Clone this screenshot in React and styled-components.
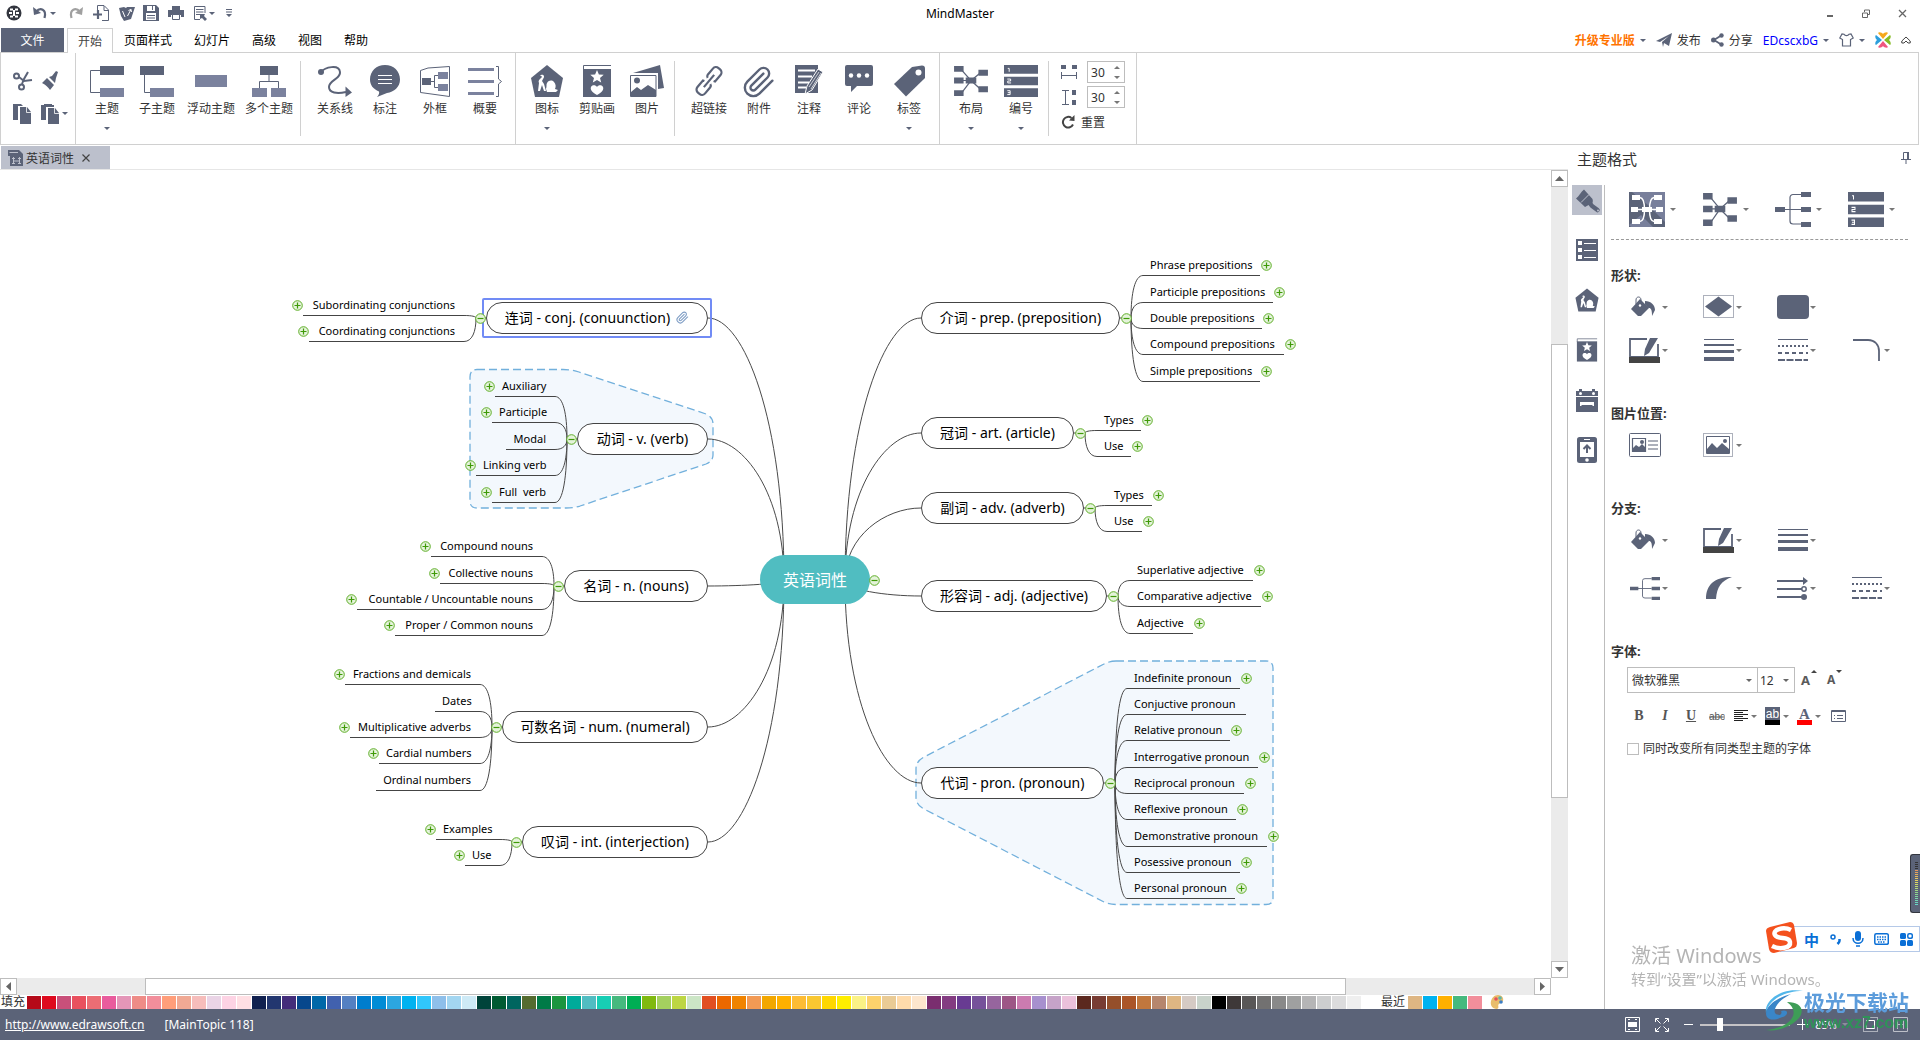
import React, { useState } from "react";
import styled, { createGlobalStyle, css } from "styled-components";

const INK = "#5b6378";
const SOFT = "#7b829e";
const LINE = "#d0d0d0";
const EDGE = "#bdbdbd";

const GlobalStyle = createGlobalStyle`
  *, *::before, *::after { box-sizing: border-box; }
  html, body, #root { height: 100%; }
  body { margin: 0; background: #fff; overflow: hidden; }
  body, button, input, select {
    font-family: "Noto Sans", "Noto Sans CJK SC", sans-serif;
    font-size: 12px;
    color: #333;
  }
  svg { display: block; flex: none; }
`;

const plainButton = css`
  border: 0;
  padding: 0;
  margin: 0;
  background: transparent;
  cursor: pointer;
`;

const Svg = ({ w, h, box, children, ...rest }) => (
  <svg width={w} height={h} viewBox={box || `0 0 ${w} ${h}`} fill="none" aria-hidden="true" {...rest}>
    {children}
  </svg>
);

/* ---------- icons ---------- */

const TopicIcon = () => (
  <Svg w={36} h={32}>
    <path d="M11 5.500H1.500V27.500H11" stroke={INK} />
    <path fill={INK} d="M11 1h24v9H11z" />
    <path fill={SOFT} d="M11 23h24v9H11z" />
  </Svg>
);
const SubtopicIcon = () => (
  <Svg w={36} h={32}>
    <path d="M5.500 9V27.500H11" stroke={INK} />
    <path fill={INK} d="M1 1h24v9H1z" />
    <path fill={SOFT} d="M11 23h24v9H11z" />
  </Svg>
);
const FloatingIcon = () => (
  <Svg w={36} h={32}>
    <path fill={SOFT} d="M2 10h32v12H2z" />
  </Svg>
);
const MultipleIcon = () => (
  <Svg w={36} h={32}>
    <path d="M18 9V16.500M8.500 23V16.500H27.500V23" stroke={INK} />
    <path fill={INK} d="M9 1h18v9H9z" />
    <path fill={SOFT} d="M1 23h15v9H1zM20 23h15v9H20z" />
  </Svg>
);
const RelationIcon = () => (
  <Svg w={36} h={32}>
    <circle cx="4" cy="7" r="3" fill={INK} />
    <path d="M4 7C8 2 22-1 23 7C24 14 12 15 12 22C12 28 20 29 29 27" stroke={INK} strokeWidth="2" />
    <path fill={INK} d="M28.500 21.500 35 27.500 28.500 32z" />
  </Svg>
);
const CalloutIcon = () => (
  <Svg w={36} h={32}>
    <path fill={INK} d="M18 0C26.500 0 33 6 33 14.500C33 22 27 27 20 28L10 32C12 30 12.500 28 12 26.500C6 24 3 20 3 14.500C3 6 9.500 0 18 0z" />
    <path d="M11 10.500h14M11 14.500h14M11 18.500h14" stroke="#fff" />
  </Svg>
);
const FrameIcon = () => (
  <Svg w={36} h={32}>
    <path d="M3.500 5.500 11 3 32.500 1.500V31.500L3.500 27.500z" stroke={INK} />
    <path d="M14 16.500h3.500M21 10.500H17.500V22.500H21" stroke={INK} />
    <path fill={INK} d="M5 13h9v7H5z" />
    <path fill={SOFT} d="M21 7h10v7H21zM21 19h10v7H21z" />
  </Svg>
);
const SummaryIcon = () => (
  <Svg w={36} h={32}>
    <path fill={SOFT} d="M1 3h26v3H1zM1 15h26v3H1zM1 27h26v3H1z" />
    <path d="M29 1.500H31.500V14L34.500 16.500 31.500 19V31.500H29" stroke={INK} />
  </Svg>
);
const MarkIcon = ({ w = 36, h = 32 }) => (
  <Svg w={w} h={h} box="0 0 36 32">
    <path fill={INK} d="M18 0 34 13 30 32H6L2 13z" />
    <path
      fill="#fff"
      d="M12 10c3-1 4 2 2 4l-1 2 2 3 2 7h-2l-2-6-2 6H9l1-8c-1-2 0-3 1-4l2-2c0-1-1-1-2-1zM17 24c1-3 0-4 1-6 2-3 5-3 7-1 2 2 2 5 1 7l3 1-2 2h-9z"
    />
  </Svg>
);
const ClipartIcon = ({ w = 36, h = 32 }) => (
  <Svg w={w} h={h} box="0 0 36 32">
    <path fill={INK} d="M4 4h28v28H4z" />
    <path d="M4.500 5V0.500H32" stroke={INK} />
    <path fill="#fff" d="m18 5 1.900 4.400 4.800.4-3.700 3.100 1.200 4.600L18 15l-4.200 2.500 1.200-4.600-3.700-3.100 4.800-.4zM18 30c-5-3-7-5-6-8 1-2.500 5-2 6 0 1-2 5-2.500 6 0 1 3-1 5-6 8z" />
  </Svg>
);
const PhotosIcon = () => (
  <Svg w={36} h={32}>
    <path fill={INK} d="M4 8 31 0l4 23-6 1V8z" />
    <path fill="#fff" stroke={INK} d="M1.500 10.500h25.500v21H1.500z" />
    <circle cx="8" cy="15.500" r="3" fill={INK} />
    <path fill={INK} d="M2 27 8 22l4 3 7-5 8 5v7H2z" />
  </Svg>
);
const LinkIcon = () => (
  <Svg w={36} h={32}>
    <g transform="rotate(-50 18 16)" stroke={INK} strokeWidth="2.200">
      <path d="M15 12.500 14.500 11H6a4 4 0 0 0-4 4v2a4 4 0 0 0 4 4h8a3 3 0 0 0 2.500-2" />
      <path d="M21 19.500 21.500 21H30a4 4 0 0 0 4-4v-2a4 4 0 0 0-4-4h-8a3 3 0 0 0-2.500 2" />
      <path d="M10 16h16" />
    </g>
  </Svg>
);
const ClipIcon = ({ size = 34, color = INK, stroke = 1.700 }) => (
  <Svg w={size} h={size} box="0 0 24 24">
    <path
      d="m21.440 11.050-9.190 9.190a6 6 0 0 1-8.490-8.490l8.570-8.570A4 4 0 1 1 18 8.840l-8.590 8.570a2 2 0 0 1-2.830-2.830l8.490-8.480"
      stroke={color}
      strokeWidth={stroke}
      strokeLinecap="round"
    />
  </Svg>
);
const NoteIcon = () => (
  <Svg w={36} h={32}>
    <path fill={INK} d="M4 0h23v28H4z" />
    <path d="M7 5.500h17M7 11.500h14M7 17.500h11M7 22.500h8" stroke="#fff" strokeWidth="2" />
    <path fill={INK} stroke="#fff" d="M14 29l2-8L27 4l5 3-11 18z" />
    <path d="M18 22 28 7M20 24 30 8" stroke="#fff" strokeWidth=".7" />
  </Svg>
);
const CommentIcon = () => (
  <Svg w={36} h={32}>
    <path fill={INK} d="M6 0h24a2 2 0 0 1 2 2v17a2 2 0 0 1-2 2H16l-6 6v-6H6a2 2 0 0 1-2-2V2a2 2 0 0 1 2-2z" />
    <g fill="#fff">
      <circle cx="10" cy="10.500" r="2.200" />
      <circle cx="18" cy="10.500" r="2.200" />
      <circle cx="26" cy="10.500" r="2.200" />
    </g>
  </Svg>
);
const TagIcon = () => (
  <Svg w={36} h={32}>
    <path fill={INK} d="M3 19 21 2l10-1.500a3 3 0 0 1 3 3V13L15 31.500z" />
    <circle cx="27.500" cy="7.500" r="3" fill="#fff" />
  </Svg>
);
const LayoutIcon = ({ w = 36, h = 32 }) => (
  <Svg w={w} h={h} box="1 0 34 33" preserveAspectRatio="none">
    <path d="M9 5 18 16 9 29M9 16H18M27 8 18 16 27 25" stroke={INK} strokeWidth="1.200" />
    <path fill={INK} d="M2 1h9v6H2zM2 13h9v6H2zM2 26h9v6H2zM13 13h10v6H13zM25 5h9v6H25zM25 22h9v6H25z" />
  </Svg>
);
const NumberIcon = ({ w = 36, h = 32 }) => (
  <Svg w={w} h={h} box="0 0 36 33" preserveAspectRatio="none">
    <path fill={INK} d="M0 0h36v9H0zM0 12h36v9H0zM0 24h36v9H0z" />
    <path stroke="#fff" d="M4 3.500h1.500V7M3.500 14.500H7V16.500H4V18.500H7.500M3.500 26.500H6.500V30.500H3.500M4 28.500H6.500" />
  </Svg>
);
const MapStyleIcon = () => (
  <Svg w={36} h={35}>
    <path fill={INK} d="M0 0h36v35H0z" />
    <path fill={SOFT} d="M3 0H36V30L19 13zM0 33 12 23 24 35H2z" opacity=".9" />
    <path d="M11 5.500C15 6 15.500 12 15.500 17.500S15 29 11 29.500M25 5.500C21 6 20.500 12 20.500 17.500S21 29 25 29.500M8 17.500H28" stroke="#fff" strokeWidth="1.500" />
    <path fill="#fff" d="M3 3h8v5H3zM2 15h7v5H2zM3 27h8v5H3zM25 3h8v5H25zM27 15h7v5H27zM25 27h8v5H25zM13 15h10v5H13z" />
  </Svg>
);
const TreeIcon = ({ w = 36, h = 35 }) => (
  <Svg w={w} h={h} box="0 0 36 35" preserveAspectRatio="none">
    <path d="M8 17.500H26M26 2.500H18a3 3 0 0 0-3 3V29a3 3 0 0 0 3 3H26" stroke={INK} strokeWidth="1.200" />
    <path fill={INK} d="M0 15h10v5H0zM26 0h10v5H26zM26 15h10v5H26zM26 30h10v5H26z" />
  </Svg>
);
const BucketIcon = () => (
  <Svg w={31} h={24}>
    <path fill={INK} d="M2 14 11 4l9 9-8 8h-3zM16 6c6 0 10 4 10 9l-3 6c0-6-1-8-3-8l-4-4z" />
    <path d="M7 9V5c0-4 5-4 5 0v6" stroke={INK} />
    <circle cx="11" cy="10.500" r="1.200" fill="#fff" />
  </Svg>
);
const DiamondIcon = () => (
  <Svg w={31} h={24}>
    <path d="M.5.500h30v22H.500z" stroke={INK} strokeDasharray="1 1" />
    <path fill={INK} d="M15.500 1.500 29 11.500 15.500 21.500 2 11.500z" />
  </Svg>
);
const RoundRectIcon = () => (
  <Svg w={32} h={24}>
    <rect width="32" height="24" rx="4" fill={INK} />
  </Svg>
);
const PenBoxIcon = () => (
  <Svg w={31} h={25}>
    <path d="M18 1H1V19H29V6" stroke={INK} strokeWidth="1.800" />
    <path fill={INK} d="M21 0h8L20 15l-5 3 1-7z" />
    <path fill="#444" d="M0 19h31v6H0z" />
  </Svg>
);
const WeightIcon = () => (
  <Svg w={30} h={22}>
    <path fill={INK} d="M0 0h30v1H0zM0 5h30v2H0zM0 11h30v3H0zM0 18h30v4H0z" />
  </Svg>
);
const DashIcon = () => (
  <Svg w={30} h={22}>
    <path d="M0 .5h30" stroke={INK} />
    <path d="M0 7h30" stroke={INK} strokeWidth="2" strokeDasharray="2 2" />
    <path d="M0 14h30" stroke={INK} strokeWidth="2" strokeDasharray="4 3" />
    <path d="M0 21h30" stroke={INK} strokeWidth="2" strokeDasharray="7 1.500" />
  </Svg>
);
const CornerIcon = () => (
  <Svg w={31} h={22}>
    <path d="M2 1H17C24 1 28 6 28 12V22" stroke={INK} strokeWidth="1.800" />
  </Svg>
);
const CardPhotoIcon = () => (
  <Svg w={32} h={24}>
    <rect x=".5" y=".5" width="31" height="23" rx="1" stroke={INK} />
    <path d="M3.500 5.500H16.500V18.500H3.500zM19 8h10M19 12h10M19 16h10" stroke={INK} strokeWidth="1.200" />
    <path fill={INK} d="M4 15 7 12l3 2 3-3 3 3v4H4z" />
    <circle cx="13" cy="9" r="2" fill={INK} />
  </Svg>
);
const PhotoDotsIcon = () => (
  <Svg w={31} h={24}>
    <path d="M.5.500h29v23H.500z" stroke={INK} strokeDasharray="1 1" />
    <path d="M3.500 3.500H26.500V20.500H3.500z" stroke={INK} />
    <path fill={INK} d="M4 16 9 10l5 5 5-5 7 6v4H4z" />
    <circle cx="22" cy="8" r="2" fill={INK} />
  </Svg>
);
const TaperIcon = () => (
  <Svg w={30} h={22}>
    <path fill={INK} d="M2 22C2 8 10 0 28 0 17 4 13 10 12 22z" />
  </Svg>
);
const ArrowsIcon = () => (
  <Svg w={31} h={23}>
    <path d="M0 4h27M0 12h25M0 20h27" stroke={INK} strokeWidth="1.800" />
    <path fill={INK} d="M26 0 31 4 26 8z" />
    <circle cx="27" cy="12" r="2.200" fill="#fff" stroke={INK} strokeWidth="1.500" />
    <circle cx="27" cy="20" r="3" fill={INK} />
  </Svg>
);
const PaintbrushIcon = () => (
  <Svg w={30} h={30}>
    <path fill={INK} d="M4 13.500C7 11 9 7 12 4.500L20.500 14c1 3 0 5-3 5.500L13 22z" />
    <path d="M9 17.500 17 9.500" stroke="#bcc0cc" />
    <path d="M17 17 20 21 25.500 25" stroke={INK} strokeWidth="4.500" strokeLinecap="round" />
    <circle cx="26" cy="25.500" r="1" fill="#bcc0cc" />
  </Svg>
);
const ListIcon = () => (
  <Svg w={22} h={22}>
    <path fill={INK} d="M0 0h22v22H0z" />
    <path fill="#fff" d="M2 2h4v4H2zM2 9h4v4H2zM2 16h4v4H2zM8 4h12v1H8zM8 11h12v1H8zM8 18h12v1H8z" />
  </Svg>
);
const CalendarIcon = () => (
  <Svg w={22} h={23}>
    <path fill={INK} d="M0 2h3V0h3v2h10V0h3v2h3v5H0zM0 8h22v15H0z" />
    <circle cx="4.500" cy="4.500" r="1.500" fill="#fff" />
    <circle cx="17.500" cy="4.500" r="1.500" fill="#fff" />
    <path fill="#fff" d="M4 13h14v4h-1.500v-1H5.500v1H4z" />
  </Svg>
);
const PhoneIcon = () => (
  <Svg w={20} h={26}>
    <rect width="20" height="26" rx="2.500" fill={INK} />
    <path fill="#fff" d="M3 5h14v15H3zM7 2h6v1H7z" />
    <circle cx="10" cy="23" r="1.800" fill="#fff" />
    <path d="M10 16V9M6.500 12 10 8.500 13.500 12" stroke={INK} strokeWidth="2" />
  </Svg>
);
const ScissorsIcon = () => (
  <Svg w={20} h={20}>
    <g stroke={INK} strokeWidth="2">
      <circle cx="3.500" cy="5" r="2.500" />
      <circle cx="8.500" cy="16" r="2.500" />
      <path d="M6 6 11 10 19 9M9 13 11 8 15 1" />
    </g>
  </Svg>
);
const BrushIcon = () => (
  <Svg w={18} h={20}>
    <path fill={INK} d="M1 12 6 7l7 7-4 5c-2-3-4-5-8-7z" />
    <path fill={INK} d="M8 6 11 5 15 0l2 1-2 6-1 5z" />
  </Svg>
);
const CopyIcon = () => (
  <Svg w={19} h={20}>
    <path fill={INK} d="M0 0h8l2 2H5v14H0zM7 3h7l4 5v12H7z" />
    <path d="M13.500 3V8.500H18" stroke="#fff" strokeWidth=".8" />
  </Svg>
);
const PasteIcon = () => (
  <Svg w={19} h={20}>
    <path fill={INK} d="M0 1h3v15H0zM3 0h8v2H3zM11 1h2v2H5v13H3V1zM7 4h7l4 5v11H7z" />
    <path d="M13.500 4V9.500H18" stroke="#fff" strokeWidth=".8" />
  </Svg>
);
const LogoIcon = () => (
  <Svg w={16} h={16}>
    <circle cx="8" cy="8" r="7.500" fill="#33363f" />
    <path fill="#fff" d="M4 3.500h3v2H4zM9 3.500h3v2H9zM3 7h3v2H3zM10 7h3v2h-3zM4 10.500h3v2H4zM9 10.500h3v2H9zM7 5h2v6H7z" />
  </Svg>
);
const UndoIcon = ({ flip, color = INK }) => (
  <Svg w={16} h={14} transform={flip ? "scale(-1 1)" : undefined}>
    <path fill={color} d="M1 1 2 9 9 7z" />
    <path d="M4 6C8 1 15 3 12.500 12" stroke={color} strokeWidth="2.200" />
  </Svg>
);
const NewDocIcon = () => (
  <Svg w={16} h={16}>
    <path d="M4.500 8V.500H11L15.500 5V15.500H9M11 1V5.500H15" stroke={INK} />
    <path d="M0 9.500H9M5 5V14" stroke={INK} strokeWidth="2.200" />
  </Svg>
);
const OpenIcon = () => (
  <Svg w={17} h={16}>
    <path fill={INK} d="M1 3 6 2l2 1 1-1h8l-4 12-7 2L3 11z" />
    <path d="M4.500 6 7 12M13 4.500 9.500 11M10.500 5.500 13 4.500 13.500 7" stroke="#fff" />
  </Svg>
);
const SaveIcon = () => (
  <Svg w={16} h={16}>
    <path fill={INK} d="M0 0h13l3 3v13H0z" />
    <path fill="#fff" d="M4 1h8v5H4zM3 8h10v7H3z" />
    <path d="M9.500 1v4M4 10.500h8M4 13h8" stroke={INK} />
  </Svg>
);
const PrintIcon = () => (
  <Svg w={16} h={14}>
    <path fill={INK} d="M4 0h8v4H4zM0 4h16v7h-3V9H3v2H0z" />
    <path fill="#fff" stroke={INK} d="M4.500 8.500h7v5h-7z" />
  </Svg>
);
const ExportIcon = () => (
  <Svg w={13} h={15}>
    <path d="M11 7V.500H.500V13.500H6M2 3.500h7.500M2 6h7.500M2 8.500h5" stroke={INK} />
    <path fill={INK} d="M6 8h5l-1 2 3 3-2 2-3-3-2 1z" />
  </Svg>
);
const MoreIcon = () => (
  <Svg w={8} h={8}>
    <path fill={INK} d="M1 0h6v1H1zM1 2.500h6v1H1zM1 5h6L4 8z" />
  </Svg>
);
const PlaneIcon = () => (
  <Svg w={16} h={14}>
    <path fill={INK} d="M0 8 16 0 13 13 8 10 7 14 6 9 13 3 4 9z" />
  </Svg>
);
const ShareIcon = () => (
  <Svg w={13} h={14}>
    <path d="M11 2 3 7l8 5" stroke={INK} strokeWidth="1.800" />
    <g fill={INK}>
      <circle cx="10.500" cy="2.500" r="2.200" />
      <circle cx="2.500" cy="7" r="2.500" />
      <circle cx="10.500" cy="11.500" r="2.200" />
    </g>
  </Svg>
);
const ShirtIcon = () => (
  <Svg w={15} h={14}>
    <path d="M5 1.200C6 3 9 3 10 1.200L12 1 14.200 5 11.500 6.500V13H3.500V6.500L.800 5 3 1z" stroke={INK} strokeWidth="1.200" />
  </Svg>
);
const FlowerIcon = () => (
  <Svg w={16} h={16}>
    <path fill="#f5a81c" d="M3 1c1-1.500 4-.5 5 1 1-1.500 4-2.500 5-1l-5 6z" />
    <path fill="#f0567f" d="M3 15c1 1.500 4 .5 5-1 1 1.500 4 2.500 5 1L8 9z" />
    <path fill="#2d9fdc" d="M1 3c-1.500 1-.5 4 1 5-1.500 1-2.500 4-1 5l6-5z" />
    <path fill="#86bc25" d="M15 3c1.500 1 .5 4-1 5 1.500 1 2.500 4 1 5L9 8z" />
  </Svg>
);
const CollapseIcon = () => (
  <Svg w={10} h={8}>
    <path d="M.8 5 5 1 9.200 5V7H7L5 5 3 7H.800z" stroke="#444" />
  </Svg>
);
const PinIcon = () => (
  <Svg w={10} h={12}>
    <path d="M2.500 7V.500H7.500V7M0 7.500H10M5 8v4" stroke={INK} />
    <path fill={INK} d="M6 0h2v7H6z" />
  </Svg>
);
const HSpaceIcon = () => (
  <Svg w={16} h={15}>
    <path fill={INK} d="M0 0h5v4H0zM11 0h5v4H11z" />
    <path d="M.5 7v7M15.500 7v7M0 10.500h16" stroke={INK} />
  </Svg>
);
const VSpaceIcon = () => (
  <Svg w={16} h={15}>
    <path fill={INK} d="M11 0h4v5H11zM11 10h4v5H11z" />
    <path d="M1 .5h7M1 14.500h7M4.500 0v15" stroke={INK} />
  </Svg>
);
const ResetIcon = () => (
  <Svg w={14} h={14}>
    <path d="M12 9.500A5.300 5.300 0 1 1 10.500 3" stroke="#444" strokeWidth="2" />
    <path fill="#444" d="M8 5.500 13.500 6V0z" />
  </Svg>
);
const DocIcon = () => (
  <Svg w={17} h={17}>
    <path fill={INK} d="M1 1h11l4 4v12H3V7H1z" />
    <path d="M2.500 3.500H11M5 9.500h3M11 9.500h3M5 14.500h3M11 14.500h3M6.500 8v7M12.500 8v7M7 12h5" stroke="#bcc0cc" />
  </Svg>
);

/* ---------- shared parts ---------- */

const Caret = styled.span`
  flex: none;
  border: 3px solid transparent;
  border-top-color: ${(p) => p.$color || INK};
  border-bottom: 0;
  width: 6px;
  height: 3px;
`;

const Shell = styled.div`
  display: flex;
  flex-direction: column;
  height: 100vh;
  background: #fff;
`;

/* ---------- title bar ---------- */

const TitleBar = styled.header`
  display: grid;
  grid-template-columns: 1fr auto 1fr;
  align-items: center;
  height: 28px;
  padding: 0 4px 2px;
`;
const QuickAccess = styled.div`
  display: flex;
  align-items: center;
  gap: 5px;
`;
const QuickButton = styled.button`
  ${plainButton}
  display: flex;
  align-items: center;
  justify-content: center;
  gap: 2px;
  height: 20px;
  min-width: ${(p) => (p.$narrow ? 8 : 20)}px;
  padding: ${(p) => (p.$menu ? "0 5px 0 3px" : 0)};
`;
const AppTitle = styled.h1`
  margin: 0;
  font-size: 12px;
  font-weight: 400;
  color: #000;
`;
const WindowControls = styled.div`
  display: flex;
  justify-content: flex-end;
  gap: 16px;
  padding-right: 4px;
`;
const WindowButton = styled.button`
  ${plainButton}
  display: grid;
  place-items: center;
  width: 20px;
  height: 20px;
`;

/* ---------- ribbon tabs ---------- */

const TabBar = styled.nav`
  display: flex;
  align-items: stretch;
  height: 24px;
  padding-left: 1px;
  line-height: 24px;
`;
const FileTab = styled.button`
  ${plainButton}
  width: 63px;
  margin-right: 3px;
  background: ${INK};
  color: #fff;
`;
const RibbonTab = styled.button`
  ${plainButton}
  padding: 0 11px;
  color: #000;
  ${(p) =>
    p.$active &&
    css`
      position: relative;
      margin-bottom: -1px;
      padding: 0 10px;
      color: #444;
      background: #fff;
      border: 1px solid ${LINE};
      border-bottom: 0;
    `}
`;
const Account = styled.div`
  display: flex;
  align-items: center;
  gap: 10px;
  margin-left: auto;
  padding-right: 9px;
`;
const AccountButton = styled.button`
  ${plainButton}
  display: flex;
  align-items: center;
  gap: 5px;
  color: ${(p) => p.$color || "#333"};
  font-weight: ${(p) => (p.$bold ? 700 : 400)};
`;

/* ---------- ribbon ---------- */

const Ribbon = styled.section`
  display: flex;
  height: 93px;
  margin-right: 1px;
  border: 1px solid ${LINE};
`;
const RibbonPanel = styled.div`
  display: flex;
  align-items: flex-start;
  padding: 0 5px 0 6px;
  border-right: 1px solid ${LINE};
`;
const RibbonSplit = styled.span`
  width: 1px;
  height: 75px;
  margin: 8px ${(p) => (p.$tight ? 12 : 9)}px 0 2px;
  background: ${LINE};
`;
const RibbonButton = styled.button`
  ${plainButton}
  display: flex;
  flex-direction: column;
  align-items: center;
  min-width: 50px;
  height: 90px;
  padding: 12px 5px 0;
`;
const RibbonGlyph = styled.span`
  display: flex;
  justify-content: center;
  height: 32px;
`;
const RibbonLabel = styled.span`
  margin: 4px 0 10px;
  line-height: 16px;
  white-space: nowrap;
`;
const Clipboard = styled.div`
  display: grid;
  grid-template-columns: 28px 28px;
  grid-auto-rows: 33px;
  align-items: center;
  padding-top: 11px;
  width: 63px;
`;
const ClipboardButton = styled.button`
  ${plainButton}
  display: flex;
  align-items: center;
  justify-content: flex-start;
  gap: 2px;
  padding-left: 6px;
  height: 28px;
`;
const Spacing = styled.div`
  display: flex;
  flex-direction: column;
  gap: 3px;
  padding: 8px 6px 0 0;
`;
const SpacingField = styled.label`
  display: flex;
  align-items: center;
  gap: 10px;
`;
const Spinner = styled.span`
  display: flex;
  width: 38px;
  height: 22px;
  border: 1px solid ${EDGE};
`;
const SpinnerInput = styled.input`
  width: 22px;
  padding: 0 0 0 3px;
  border: 0;
  outline: 0;
  background: transparent;
`;
const SpinnerButtons = styled.span`
  display: flex;
  flex-direction: column;
  justify-content: space-around;
  width: 14px;
`;
const SpinnerButton = styled.button`
  ${plainButton}
  display: grid;
  place-items: center;
  height: 9px;
  transform: ${(p) => (p.$up ? "rotate(180deg)" : "none")};
`;
const ResetButton = styled.button`
  ${plainButton}
  display: flex;
  align-items: center;
  gap: 6px;
  height: 22px;
`;

/* ---------- workspace ---------- */

const Workspace = styled.main`
  display: flex;
  flex: 1;
  min-height: 0;
`;
const DocumentArea = styled.section`
  display: flex;
  flex-direction: column;
  flex: 1;
  min-width: 0;
`;
const DocTabs = styled.div`
  display: flex;
  height: 25px;
  padding: 1px 0 0 1px;
  border-bottom: 1px solid #e6e6e6;
`;
const DocTab = styled.div`
  display: flex;
  align-items: center;
  gap: 2px;
  width: 109px;
  padding-left: 6px;
  background: #bcc0cc;
`;
const DocClose = styled.button`
  ${plainButton}
  display: grid;
  place-items: center;
  width: 20px;
  height: 20px;
`;
const CanvasRow = styled.div`
  display: flex;
  flex: 1;
  min-height: 0;
`;
const Canvas = styled.div`
  position: relative;
  flex: 1;
  min-width: 0;
  overflow: hidden;
  background: #fff;
`;
const VScroll = styled.div`
  display: flex;
  flex-direction: column;
  width: 17px;
  background: #ebebeb;
`;
const HScroll = styled.div`
  display: flex;
  height: 17px;
  margin-right: 17px;
  background: #ebebeb;
`;
const ScrollButton = styled.button`
  ${plainButton}
  display: grid;
  place-items: center;
  flex: none;
  width: 17px;
  height: 17px;
  border: 1px solid ${EDGE};
  background: #fff;
`;
const ScrollGap = styled.span`
  flex: ${(p) => p.$size};
`;
const ScrollThumb = styled.span`
  flex: ${(p) => p.$size};
  border: 1px solid ${EDGE};
  background: #fff;
`;

/* ---------- mind map ---------- */

const Links = styled.svg`
  position: absolute;
  left: 0;
  top: 0;
  width: 1551px;
  height: 808px;
`;
const Root = styled.div`
  position: absolute;
  left: 760px;
  top: 385px;
  display: grid;
  place-items: center;
  width: 110px;
  height: 49px;
  padding-bottom: 2px;
  border-radius: 25px;
  background: #50bdc1;
  color: #fff;
  font-size: 16px;
`;
const Topic = styled.div`
  position: absolute;
  left: ${(p) => p.$x}px;
  top: ${(p) => p.$y - 16}px;
  display: flex;
  align-items: center;
  justify-content: center;
  gap: 6px;
  width: ${(p) => p.$w}px;
  height: 32px;
  padding-bottom: 2px;
  border: 1px solid #444;
  border-radius: 16px;
  background: #fff;
  color: #000;
  font-size: 14px;
  white-space: nowrap;
  ${(p) =>
    p.$selected &&
    css`
      &::after {
        content: "";
        position: absolute;
        inset: -5px;
        border: 2px solid #718bf5;
        border-radius: 2px;
      }
    `}
`;
const Leaf = styled.div`
  position: absolute;
  left: ${(p) => p.$x}px;
  top: ${(p) => p.$y - 20}px;
  width: ${(p) => p.$w}px;
  height: 21px;
  padding: 0 9px 0 7px;
  border-bottom: 1px solid #444;
  color: #000;
  font-size: 11px;
  line-height: 19px;
  text-align: ${(p) => (p.$left ? "right" : "left")};
  white-space: pre;
`;
const Toggle = styled.button`
  ${plainButton}
  position: absolute;
  width: 11px;
  height: 11px;
  ${(p) => (p.$side === "left" ? "left: -11px; top: 5px;" : "")}
  ${(p) => (p.$side === "right" ? "right: -12px; top: 5px;" : "")}
  ${(p) => (p.$side ? "" : `left: ${p.$x - 5}px; top: ${p.$y - 5}px;`)}
`;

const ToggleMark = ({ open, ...rest }) => (
  <Toggle aria-label={open ? "collapse" : "expand"} {...rest}>
    <Svg w={11} h={11}>
      <circle cx="5.500" cy="5.500" r="4.800" fill="#e4f3da" stroke="#5fae28" />
      <path d={open ? "M2.500 5.500h6" : "M2.500 5.500h6M5.500 2.500v6"} stroke="#3f9a08" strokeWidth="1.200" />
    </Svg>
  </Toggle>
);

const TOPICS = [
  { text: "介词 - prep. (preposition)", x: 921, w: 199, y: 148, join: 1131, leaves: [["Phrase prepositions", 105, 1260, 1], ["Participle prepositions", 132, 1273, 1], ["Double prepositions", 158, 1262, 1], ["Compound prepositions", 184, 1284, 1], ["Simple prepositions", 211, 1260, 1]] },
  { text: "冠词 - art. (article)", x: 921, w: 153, y: 263, join: 1085, leaves: [["Types", 260, 1141, 1], ["Use", 286, 1131, 1]] },
  { text: "副词 - adv. (adverb)", x: 921, w: 163, y: 338, join: 1095, leaves: [["Types", 335, 1152, 1], ["Use", 361, 1142, 1]] },
  { text: "形容词 - adj. (adjective)", x: 921, w: 186, y: 426, join: 1118, leaves: [["Superlative adjective", 410, 1253, 1], ["Comparative adjective", 436, 1261, 1], ["Adjective", 463, 1193, 1]] },
  { text: "代词 - pron. (pronoun)", x: 921, w: 183, y: 613, join: 1115, leaves: [["Indefinite pronoun", 518, 1240, 1], ["Conjuctive pronoun", 544, 1246, 0], ["Relative pronoun", 570, 1230, 1], ["Interrogative pronoun", 597, 1258, 1], ["Reciprocal pronoun", 623, 1244, 1], ["Reflexive pronoun", 649, 1236, 1], ["Demonstrative pronoun", 676, 1267, 1], ["Posessive pronoun", 702, 1240, 1], ["Personal pronoun", 728, 1235, 1]] },
  { text: "连词 - conj. (conuunction)", left: true, selected: true, clip: true, x: 486, w: 222, y: 148, join: 476, leaves: [["Subordinating conjunctions", 145, 303, 1], ["Coordinating conjunctions", 171, 309, 1]] },
  { text: "动词 - v. (verb)", left: true, x: 577, w: 131, y: 269, join: 567, leaves: [["Auxiliary", 226, 495, 1], ["Participle", 252, 492, 1], ["Modal", 279, 506, 0], ["Linking verb", 305, 476, 1], ["Full  verb", 332, 492, 1]] },
  { text: "名词 - n. (nouns)", left: true, x: 564, w: 144, y: 416, join: 554, leaves: [["Compound nouns", 386, 431, 1], ["Collective nouns", 413, 440, 1], ["Countable / Uncountable nouns", 439, 357, 1], ["Proper / Common nouns", 465, 395, 1]] },
  { text: "可数名词 - num. (numeral)", left: true, x: 502, w: 206, y: 557, join: 492, leaves: [["Fractions and demicals", 514, 345, 1], ["Dates", 541, 435, 0], ["Multiplicative adverbs", 567, 350, 1], ["Cardial numbers", 593, 379, 1], ["Ordinal numbers", 620, 376, 0]] },
  { text: "叹词 - int. (interjection)", left: true, x: 522, w: 186, y: 672, join: 512, leaves: [["Examples", 669, 436, 1], ["Use", 695, 465, 1]] },
];

const rootLink = (t) => {
  const start = t.left ? 784 : 845;
  const bend = t.left ? 744 : 885;
  const end = t.left ? t.x + t.w : t.x;
  return `M${start} 410C${start} ${410 + (t.y - 410) * 0.61} ${bend} ${t.y} ${end} ${t.y}`;
};
const leafLink = (t, y) => {
  const d = t.left ? -1 : 1;
  const ly = y + 0.5;
  return `M${t.join} ${t.y}C${t.join} ${t.y + (ly - t.y) * 0.6} ${t.join + 4 * d} ${ly} ${t.join + 12 * d} ${ly}`;
};

function MindMap() {
  return (
    <Canvas>
      <Links aria-hidden="true" fill="none">
        <g fill="#f3f8fd" stroke="#72b0dc" strokeWidth="1.300" strokeDasharray="8 4">
          <path d="M477 199.500H563Q571 199.500 579 202L706 244Q713 247 713 254V285Q713 291 706 294L580 336Q573 338 566 338H477Q470 338 470 331V207Q470 199.500 477 199.500z" />
          <path d="M1116 491H1266Q1273 491 1273 498V728Q1273 734.500 1266 734.500H1116Q1110 734.500 1104 732L924 639Q916 635 916 627V599Q916 591 924 587L1104 494Q1110 491 1116 491z" />
        </g>
        <g stroke="#4a4a4a">
          {TOPICS.map((t) => (
            <g key={t.text}>
              <path d={rootLink(t)} />
              <path d={t.left ? `M${t.x} ${t.y}H${t.join}` : `M${t.x + t.w} ${t.y}H${t.join}`} />
              {t.leaves.map(([name, y]) => (
                <path key={name} d={leafLink(t, y)} />
              ))}
            </g>
          ))}
        </g>
      </Links>
      <Root>英语词性</Root>
      <ToggleMark open $x={874} $y={410} />
      {TOPICS.map((t) => (
        <React.Fragment key={t.text}>
          <Topic $x={t.x} $y={t.y} $w={t.w} $selected={t.selected}>
            {t.text}
            {t.clip && <ClipIcon size={13} color="#7d9cc4" stroke={2} />}
          </Topic>
          <ToggleMark open $x={t.join + (t.left ? 4 : -5)} $y={t.y} />
          {t.leaves.map(([name, y, end, more]) => (
            <Leaf
              key={name}
              $left={t.left}
              $x={t.left ? end : t.join + 12}
              $w={t.left ? t.join - 12 - end : end - t.join - 12}
              $y={y}
            >
              {name}
              {more ? <ToggleMark $side={t.left ? "left" : "right"} /> : null}
            </Leaf>
          ))}
        </React.Fragment>
      ))}
    </Canvas>
  );
}

/* ---------- colour strip ---------- */

const COLORS = "b50a19 de0a1e c9507a e9515f ec6d74 e95c9d e496b8 ee8c87 f28e9b ff9e7a f0a994 f6bdbb ead4e6 fdd3e4 ffdfe4 10204f 22366f 442d7a 07478c 0068a8 4161ae 5480c2 007dcd 008cd6 2ca6e0 00b2f0 31c6fb 8ebfea a3d6f1 ceeaf6 00433a 005a32 00655f 556b2f 007a47 1b953f 00ab9a 51bdc2 17ceb4 46b97e 00ae54 80b910 a4d05f bdd643 cce6c6 e24f21 ec6800 f08300 f29a54 f2a700 ffb000 fdbc34 f9c731 ffd700 ffee00 fbf286 fdd26c eacb95 ffdbab fde6cd 7a2e6f 833c81 683b92 76519a 96659e 9d5686 cb7bb0 a790ce c6a3c8 ebc1db 5b281e 783c33 954f2a ab5528 c1773d b6866d deb683 d5cac4 c9d3cb 000000 3e3838 595757 727171 898989 9fa0a0 b5b5b6 cdcecf dcdcdd efefef".split(" ");
const RECENT = ["deb683", "00b2f0", "ffb000", "46b97e", "f28e9b"];

const ColorStrip = styled.div`
  display: flex;
  align-items: center;
  height: 14px;
  padding-left: 1px;
  line-height: 14px;
`;
const StripLabel = styled.span`
  width: ${(p) => (p.$wide ? 46 : 26)}px;
  padding-right: ${(p) => (p.$wide ? 3 : 2)}px;
  text-align: right;
`;
const Swatch = styled.button`
  ${plainButton}
  flex: none;
  width: 14px;
  height: 13px;
  margin-right: 1px;
  background: #${(p) => p.$color};
`;
const PaletteButton = styled.button`
  ${plainButton}
  margin-left: 7px;
`;

/* ---------- format panel ---------- */

const Panel = styled.aside`
  display: flex;
  flex-direction: column;
  flex: none;
  width: 352px;
`;
const PanelHeader = styled.div`
  display: flex;
  align-items: center;
  justify-content: space-between;
  height: 26px;
  padding: 0 9px;
`;
const PanelTitle = styled.h2`
  margin: 0;
  font-size: 15px;
  font-weight: 400;
`;
const PinButton = styled.button`
  ${plainButton}
`;
const PanelBody = styled.div`
  display: flex;
  flex: 1;
  min-height: 0;
  padding: 14px 0 0 4px;
`;
const SideTabs = styled.div`
  display: flex;
  flex-direction: column;
  flex: none;
  gap: 20px;
  width: 32px;
`;
const SideTab = styled.button`
  ${plainButton}
  display: grid;
  place-items: center;
  width: 30px;
  height: 30px;
  background: ${(p) => (p.$active ? "#bcc0cc" : "transparent")};
`;
const PanelContent = styled.div`
  flex: 1;
  min-width: 0;
  padding: 0 12px 0 6px;
  border-left: 1px solid ${EDGE};
`;
const MapTools = styled.div`
  display: grid;
  grid-template-columns: repeat(4, 73px);
  height: 55px;
  padding: 7px 0 0 18px;
  border-bottom: 1px dashed #999;
`;
const ToolRow = styled.div`
  display: grid;
  grid-template-columns: repeat(4, 74px);
  height: 28px;
  margin-top: ${(p) => p.$gap || 7}px;
  padding-left: 18px;
`;
const Tool = styled.button`
  ${plainButton}
  display: flex;
  align-items: center;
  gap: ${(p) => (p.$large ? 5 : 2)}px;
  height: ${(p) => (p.$large ? 35 : 28)}px;
`;
const ToolGlyph = styled.span`
  display: flex;
  justify-content: center;
  width: ${(p) => (p.$large ? 36 : 31)}px;
`;
const PanelHeading = styled.h3`
  margin: ${(p) => (p.$first ? 26 : 40)}px 0 0;
  font-size: 13px;
  font-weight: 700;
  line-height: 18px;
  padding-bottom: 2px;
`;
const FontRow = styled.div`
  display: flex;
  align-items: center;
  margin-top: 5px;
  padding-left: 16px;
`;
const SelectBox = styled.span`
  display: flex;
  align-items: center;
  position: relative;
  width: ${(p) => p.$w}px;
  height: 26px;
  margin-right: ${(p) => (p.$last ? 6 : -1)}px;
  border: 1px solid ${EDGE};
  & > ${Caret} {
    position: absolute;
    right: 5px;
    pointer-events: none;
  }
`;
const Select = styled.select`
  appearance: none;
  width: 100%;
  height: 24px;
  padding: 0 0 0 ${(p) => (p.$tight ? 2 : 4)}px;
  border: 0;
  outline: 0;
  background: transparent;
`;
const SizeButton = styled.button`
  ${plainButton}
  display: flex;
  gap: 1px;
  width: 26px;
  color: #5a5a5a;
  font-weight: 700;
  font-size: ${(p) => (p.$down ? 12 : 13)}px;
  line-height: 20px;
  & > ${Caret} {
    transform: ${(p) => (p.$down ? "none" : "rotate(180deg)")};
  }
`;
const StyleRow = styled.div`
  display: flex;
  align-items: center;
  gap: 8px;
  height: 24px;
  margin-top: 11px;
  padding-left: 19px;
`;
const StyleButton = styled.button`
  ${plainButton}
  display: flex;
  align-items: center;
  justify-content: center;
  gap: 3px;
  min-width: 18px;
  height: 20px;
  color: #555;
  font-family: "Liberation Serif", serif;
  font-size: 14px;
  font-weight: 700;
  font-style: ${(p) => (p.$italic ? "italic" : "normal")};
  text-decoration: ${(p) => p.$line || "none"};
`;
const InkSample = styled.span`
  display: grid;
  place-items: center;
  width: 15px;
  height: 18px;
  border-bottom: 5px solid ${(p) => p.$bar};
  background: ${(p) => p.$bg || "transparent"};
  color: ${(p) => p.$fg};
  font-family: ${(p) => (p.$serif ? '"Liberation Serif", serif' : '"Liberation Sans", sans-serif')};
  font-size: ${(p) => (p.$serif ? 15 : 12)}px;
  font-weight: ${(p) => (p.$serif ? 700 : 400)};
  line-height: 12px;
`;
const ApplyAll = styled.label`
  display: flex;
  align-items: center;
  gap: 4px;
  margin-top: 14px;
  padding-left: 16px;
  line-height: 14px;
`;
const CheckBox = styled.input`
  appearance: none;
  width: 12px;
  height: 12px;
  margin: 0;
  border: 1px solid ${EDGE};
  background: #fff;
  &:checked {
    background: ${INK};
  }
`;

/* ---------- status bar ---------- */

const StatusBar = styled.footer`
  display: flex;
  align-items: center;
  gap: 20px;
  height: 31px;
  padding: 0 12px 0 5px;
  background: ${INK};
  color: #fff;
`;
const SiteLink = styled.a`
  color: #fff;
`;
const ViewTools = styled.div`
  display: flex;
  align-items: center;
  gap: 15px;
  margin-left: auto;
`;
const ZoomTools = styled.div`
  display: flex;
  align-items: center;
  gap: 7px;
`;
const StatusButton = styled.button`
  ${plainButton}
  display: flex;
  align-items: center;
  gap: 5px;
  color: #fff;
  font-size: 11px;
`;
const ZoomSlider = styled.input`
  appearance: none;
  width: 90px;
  height: 14px;
  margin: 0;
  background: linear-gradient(#c5c3c6, #c5c3c6) center / 100% 2px no-repeat;
  &::-webkit-slider-thumb {
    appearance: none;
    width: 6px;
    height: 13px;
    background: #fff;
  }
`;

/* ---------- desktop overlays ---------- */

const Activation = styled.div`
  position: fixed;
  right: 88px;
  bottom: 51px;
  width: 201px;
  color: #b4b4b4;
  white-space: nowrap;
  pointer-events: none;
`;
const ActivationTitle = styled.div`
  font-size: 20px;
  line-height: 26px;
`;
const ActivationText = styled.div`
  font-size: 15px;
  line-height: 20px;
`;
const InputBar = styled.div`
  position: fixed;
  right: 0;
  bottom: 88px;
  display: flex;
  align-items: center;
  justify-content: space-between;
  width: 140px;
  height: 26px;
  padding: 0 6px 0 23px;
  border: 1px solid #b5c9e8;
  background: #fff;
  color: #0a6fd6;
  font-size: 15px;
  font-weight: 700;
`;
const InputLogo = styled.span`
  position: absolute;
  left: -15px;
  top: -5px;
`;
const Meter = styled.div`
  position: fixed;
  right: 0;
  bottom: 127px;
  width: 10px;
  height: 59px;
  padding: 7px 2px 6px 4px;
  border: 1px solid #33363f;
  border-right: 0;
  border-radius: 3px 0 0 3px;
  background: ${INK};
`;
const MeterScale = styled.div`
  height: 100%;
  background:
    repeating-linear-gradient(transparent 0 1px, ${INK} 1px 2px),
    linear-gradient(#333 0 16%, #e8935a 17%, #e6d95e 45%, #8fd98a 70%, #5fd6d0);
`;
const SiteMark = styled.div`
  position: fixed;
  right: 11px;
  bottom: 9px;
  display: flex;
  align-items: center;
  gap: 1px;
  pointer-events: none;
`;
const SiteMarkText = styled.div`
  color: #5c9cdb;
  font-size: 21px;
  font-weight: 700;
  line-height: 26px;
  white-space: nowrap;
`;
const SiteMarkUrl = styled.div`
  color: #2f9358;
  font-family: "Liberation Sans", sans-serif;
  font-size: 16px;
  font-weight: 700;
  line-height: 16px;
`;

const RibbonItem = ({ icon, label, menu }) => (
  <RibbonButton>
    <RibbonGlyph>{icon}</RibbonGlyph>
    <RibbonLabel>{label}</RibbonLabel>
    {menu && <Caret />}
  </RibbonButton>
);

function SpaceInput({ icon, name }) {
  const [value, setValue] = useState(30);
  return (
    <SpacingField>
      {icon}
      <Spinner>
        <SpinnerInput aria-label={name} inputMode="numeric" value={value} onChange={(e) => setValue(Number(e.target.value) || 0)} />
        <SpinnerButtons>
          <SpinnerButton $up aria-label="increase" onClick={() => setValue(value + 1)}>
            <Caret $color="#777" />
          </SpinnerButton>
          <SpinnerButton aria-label="decrease" onClick={() => setValue(value - 1)}>
            <Caret $color="#777" />
          </SpinnerButton>
        </SpinnerButtons>
      </Spinner>
    </SpacingField>
  );
}

const ToolItem = ({ icon, large, menu = true, name }) => (
  <Tool $large={large} aria-label={name}>
    <ToolGlyph $large={large}>{icon}</ToolGlyph>
    {menu && <Caret $color="#777" />}
  </Tool>
);

const TABS = ["开始", "页面样式", "幻灯片", "高级", "视图", "帮助"];

export default function App() {
  const [zoom, setZoom] = useState(20);
  return (
    <Shell>
      <GlobalStyle />
      <TitleBar>
        <QuickAccess>
          <QuickButton aria-label="logo"><LogoIcon /></QuickButton>
          <QuickButton $menu aria-label="undo"><UndoIcon /><Caret /></QuickButton>
          <QuickButton aria-label="redo"><UndoIcon flip color="#a0a0a0" /></QuickButton>
          <QuickButton aria-label="new"><NewDocIcon /></QuickButton>
          <QuickButton aria-label="open"><OpenIcon /></QuickButton>
          <QuickButton aria-label="save"><SaveIcon /></QuickButton>
          <QuickButton aria-label="print"><PrintIcon /></QuickButton>
          <QuickButton $menu aria-label="export"><ExportIcon /><Caret /></QuickButton>
          <QuickButton $narrow aria-label="more"><MoreIcon /></QuickButton>
        </QuickAccess>
        <AppTitle>MindMaster</AppTitle>
        <WindowControls>
          <WindowButton aria-label="minimize">
            <Svg w={8} h={10}><path d="M1 8h6" stroke="#666" strokeWidth="2" /></Svg>
          </WindowButton>
          <WindowButton aria-label="restore">
            <Svg w={8} h={9}><path d="M2.500 3V1H7.500V5.500H6M.5 4H5.500V8.500H.500z" stroke="#666" /></Svg>
          </WindowButton>
          <WindowButton aria-label="close">
            <Svg w={9} h={9}><path d="m1 1 7 7M8 1 1 8" stroke="#666" strokeWidth="1.300" /></Svg>
          </WindowButton>
        </WindowControls>
      </TitleBar>

      <TabBar>
        <FileTab>文件</FileTab>
        {TABS.map((name, i) => (
          <RibbonTab key={name} $active={i === 0}>{name}</RibbonTab>
        ))}
        <Account>
          <AccountButton $color="#ff7300" $bold>升级专业版<Caret /></AccountButton>
          <AccountButton><PlaneIcon />发布</AccountButton>
          <AccountButton><ShareIcon />分享</AccountButton>
          <AccountButton $color="#0000ff">EDcscxbG<Caret /></AccountButton>
          <AccountButton aria-label="theme"><ShirtIcon /><Caret /></AccountButton>
          <AccountButton aria-label="apps"><FlowerIcon /></AccountButton>
          <AccountButton aria-label="collapse ribbon"><CollapseIcon /></AccountButton>
        </Account>
      </TabBar>

      <Ribbon>
        <RibbonPanel>
          <Clipboard>
            <ClipboardButton aria-label="cut"><ScissorsIcon /></ClipboardButton>
            <ClipboardButton aria-label="format painter"><BrushIcon /></ClipboardButton>
            <ClipboardButton aria-label="copy"><CopyIcon /></ClipboardButton>
            <ClipboardButton aria-label="paste"><PasteIcon /><Caret /></ClipboardButton>
          </Clipboard>
        </RibbonPanel>
        <RibbonPanel>
          <RibbonItem icon={<TopicIcon />} label="主题" menu />
          <RibbonItem icon={<SubtopicIcon />} label="子主题" />
          <RibbonItem icon={<FloatingIcon />} label="浮动主题" />
          <RibbonItem icon={<MultipleIcon />} label="多个主题" />
          <RibbonSplit />
          <RibbonItem icon={<RelationIcon />} label="关系线" />
          <RibbonItem icon={<CalloutIcon />} label="标注" />
          <RibbonItem icon={<FrameIcon />} label="外框" />
          <RibbonItem icon={<SummaryIcon />} label="概要" />
        </RibbonPanel>
        <RibbonPanel>
          <RibbonItem icon={<MarkIcon />} label="图标" menu />
          <RibbonItem icon={<ClipartIcon />} label="剪贴画" />
          <RibbonItem icon={<PhotosIcon />} label="图片" />
          <RibbonSplit />
          <RibbonItem icon={<LinkIcon />} label="超链接" />
          <RibbonItem icon={<ClipIcon />} label="附件" />
          <RibbonItem icon={<NoteIcon />} label="注释" />
          <RibbonItem icon={<CommentIcon />} label="评论" />
          <RibbonItem icon={<TagIcon />} label="标签" menu />
        </RibbonPanel>
        <RibbonPanel>
          <RibbonItem icon={<LayoutIcon />} label="布局" menu />
          <RibbonItem icon={<NumberIcon w={34} />} label="编号" menu />
          <RibbonSplit $tight />
          <Spacing>
            <SpaceInput icon={<HSpaceIcon />} name="horizontal spacing" />
            <SpaceInput icon={<VSpaceIcon />} name="vertical spacing" />
            <ResetButton><ResetIcon />重置</ResetButton>
          </Spacing>
        </RibbonPanel>
      </Ribbon>

      <Workspace>
        <DocumentArea>
          <DocTabs>
            <DocTab>
              <DocIcon />
              英语词性
              <DocClose aria-label="close document">
                <Svg w={8} h={8}><path d="m.5.500 7 7M7.500.500l-7 7" stroke="#444" strokeWidth="1.200" /></Svg>
              </DocClose>
            </DocTab>
          </DocTabs>
          <CanvasRow>
            <MindMap />
            <VScroll>
              <ScrollButton aria-label="scroll up"><Svg w={9} h={5}><path fill="#666" d="M0 5 4.500 0 9 5z" /></Svg></ScrollButton>
              <ScrollGap $size={157} />
              <ScrollThumb $size={453} />
              <ScrollGap $size={163} />
              <ScrollButton aria-label="scroll down"><Svg w={9} h={5}><path fill="#666" d="M0 0 4.500 5 9 0z" /></Svg></ScrollButton>
            </VScroll>
          </CanvasRow>
          <HScroll>
            <ScrollButton aria-label="scroll left"><Svg w={5} h={9}><path fill="#666" d="M5 0 0 4.500 5 9z" /></Svg></ScrollButton>
            <ScrollGap $size={128} />
            <ScrollThumb $size={1202} />
            <ScrollGap $size={188} />
            <ScrollButton aria-label="scroll right"><Svg w={5} h={9}><path fill="#666" d="M0 0 5 4.500 0 9z" /></Svg></ScrollButton>
          </HScroll>
          <ColorStrip>
            <StripLabel>填充</StripLabel>
            {COLORS.map((c) => <Swatch key={c} $color={c} aria-label={c} />)}
            <StripLabel $wide>最近</StripLabel>
            {RECENT.map((c) => <Swatch key={c} $color={c} aria-label={c} />)}
            <PaletteButton aria-label="palette">
              <Svg w={14} h={14}>
                <path fill="#e8bd6c" d="M8 0C12 0 14 3 13 6L9 9c-2 1 1 4-2 5C2 14 0 10 1 6 2 3 4 0 8 0z" />
                <circle cx="6" cy="4" r="1.800" fill="#e8505b" />
                <circle cx="10" cy="3" r="1.800" fill="#5fb5a8" />
                <circle cx="11" cy="7" r="1.800" fill="#3d7fc4" />
              </Svg>
            </PaletteButton>
          </ColorStrip>
        </DocumentArea>

        <Panel>
          <PanelHeader>
            <PanelTitle>主题格式</PanelTitle>
            <PinButton aria-label="pin"><PinIcon /></PinButton>
          </PanelHeader>
          <PanelBody>
            <SideTabs>
              <SideTab $active aria-label="format"><PaintbrushIcon /></SideTab>
              <SideTab aria-label="outline"><ListIcon /></SideTab>
              <SideTab aria-label="marks"><MarkIcon w={26} h={24} /></SideTab>
              <SideTab aria-label="clipart"><ClipartIcon w={26} h={24} /></SideTab>
              <SideTab aria-label="task"><CalendarIcon /></SideTab>
              <SideTab aria-label="share"><PhoneIcon /></SideTab>
            </SideTabs>
            <PanelContent>
              <MapTools>
                <ToolItem large name="map style" icon={<MapStyleIcon />} />
                <ToolItem large name="layout" icon={<LayoutIcon h={35} />} />
                <ToolItem large name="connector" icon={<TreeIcon />} />
                <ToolItem large name="numbering" icon={<NumberIcon h={35} />} />
              </MapTools>

              <PanelHeading $first>形状:</PanelHeading>
              <ToolRow>
                <ToolItem name="fill" icon={<BucketIcon />} />
                <ToolItem name="shape" icon={<DiamondIcon />} />
                <ToolItem name="corner" icon={<RoundRectIcon />} />
              </ToolRow>
              <ToolRow $gap={15}>
                <ToolItem name="line colour" icon={<PenBoxIcon />} />
                <ToolItem name="line weight" icon={<WeightIcon />} />
                <ToolItem name="line dash" icon={<DashIcon />} />
                <ToolItem name="line corner" icon={<CornerIcon />} />
              </ToolRow>

              <PanelHeading>图片位置:</PanelHeading>
              <ToolRow>
                <ToolItem name="image position" menu={false} icon={<CardPhotoIcon />} />
                <ToolItem name="image size" icon={<PhotoDotsIcon />} />
              </ToolRow>

              <PanelHeading>分支:</PanelHeading>
              <ToolRow>
                <ToolItem name="branch fill" icon={<BucketIcon />} />
                <ToolItem name="branch colour" icon={<PenBoxIcon />} />
                <ToolItem name="branch weight" icon={<WeightIcon />} />
              </ToolRow>
              <ToolRow $gap={20}>
                <ToolItem name="branch connector" icon={<TreeIcon w={30} h={23} />} />
                <ToolItem name="branch style" icon={<TaperIcon />} />
                <ToolItem name="branch arrow" icon={<ArrowsIcon />} />
                <ToolItem name="branch dash" icon={<DashIcon />} />
              </ToolRow>

              <PanelHeading>字体:</PanelHeading>
              <FontRow>
                <SelectBox $w={131}>
                  <Select aria-label="font family"><option>微软雅黑</option></Select>
                  <Caret $color="#666" />
                </SelectBox>
                <SelectBox $w={38} $last>
                  <Select $tight aria-label="font size"><option>12</option></Select>
                  <Caret $color="#666" />
                </SelectBox>
                <SizeButton aria-label="larger text">A<Caret $color="#444" /></SizeButton>
                <SizeButton $down aria-label="smaller text">A<Caret $color="#444" /></SizeButton>
              </FontRow>
              <StyleRow>
                <StyleButton>B</StyleButton>
                <StyleButton $italic>I</StyleButton>
                <StyleButton $line="underline">U</StyleButton>
                <StyleButton aria-label="strikethrough">
                  <Svg w={16} h={12}>
                    <text x="0" y="10" fontFamily="Liberation Sans, sans-serif" fontSize="10" fontWeight="400" fill="#555">abc</text>
                    <path d="M0 7h16" stroke="#555" />
                  </Svg>
                </StyleButton>
                <StyleButton aria-label="align">
                  <Svg w={14} h={12}><path d="M0 .5h14M0 2.500h9M0 4.500h14M0 6.500h9M0 8.500h14M0 10.500h9" stroke="#222" /></Svg>
                  <Caret $color="#777" />
                </StyleButton>
                <StyleButton aria-label="highlight">
                  <InkSample $bar="#000" $bg={INK} $fg="#fff">ab</InkSample>
                  <Caret $color="#777" />
                </StyleButton>
                <StyleButton aria-label="text colour">
                  <InkSample $serif $bar="#f00" $fg={INK}>A</InkSample>
                  <Caret $color="#777" />
                </StyleButton>
                <StyleButton aria-label="more text options">
                  <Svg w={15} h={12}>
                    <path d="M.5.500h14v11H.500zM0 1.500h15M3 5.500h1M6 5.500h6M3 8.500h1M6 8.500h6" stroke={INK} />
                  </Svg>
                </StyleButton>
              </StyleRow>
              <ApplyAll>
                <CheckBox type="checkbox" />
                同时改变所有同类型主题的字体
              </ApplyAll>
            </PanelContent>
          </PanelBody>
        </Panel>
      </Workspace>

      <StatusBar>
        <SiteLink href="http://www.edrawsoft.cn">http://www.edrawsoft.cn</SiteLink>
        <span>[MainTopic 118]</span>
        <ViewTools>
          <StatusButton aria-label="fit page">
            <Svg w={15} h={15}><path d="M.5.500h14v14H.500z" stroke="#fff" /><path fill="#fff" d="M3 5h9v5H3z" /><path d="M3 2.500h2M10 2.500h2M3 12.500h2M10 12.500h2" stroke="#fff" /></Svg>
          </StatusButton>
          <StatusButton aria-label="full screen">
            <Svg w={14} h={14}><path d="M.5 4V.500H4M10 .5H13.500V4M13.500 10V13.500H10M4 13.500H.500V10M1 1l4.500 4.500M13 1 8.500 5.500M13 13 8.500 8.500M1 13l4.500-4.500" stroke="#fff" /></Svg>
          </StatusButton>
          <ZoomTools>
            <StatusButton aria-label="zoom out"><Svg w={9} h={11}><path d="M0 5.500h9" stroke="#fff" /></Svg></StatusButton>
            <ZoomSlider type="range" aria-label="zoom" min="0" max="100" value={zoom} onChange={(e) => setZoom(e.target.value)} />
            <StatusButton aria-label="zoom in"><Svg w={11} h={11}><path d="M0 5.500h11M5.500 0v11" stroke="#fff" /></Svg></StatusButton>
            <StatusButton>85%<Caret $color="#8b8f9c" /></StatusButton>
          </ZoomTools>
          <StatusButton aria-label="fit selection">
            <Svg w={15} h={15}><path d="M.5.500h14v14H.500z" stroke="#fff" strokeDasharray="1 1" /><path d="M3.500 3.500h8v8h-8z" stroke="#fff" /></Svg>
          </StatusButton>
          <StatusButton aria-label="fit width">
            <Svg w={15} h={15} opacity=".6"><path d="M.5.500h14v14H.500zM4.500 3v9M10.500 3v9M4.500 7.500h6" stroke="#fff" /></Svg>
          </StatusButton>
        </ViewTools>
      </StatusBar>

      <Activation>
        <ActivationTitle>激活 Windows</ActivationTitle>
        <ActivationText>转到“设置”以激活 Windows。</ActivationText>
      </Activation>
      <Meter><MeterScale /></Meter>
      <InputBar>
        <InputLogo>
          <Svg w={32} h={32}>
            <path fill="#f4511e" d="M4 5 24 0q3 0 4 3l3 18q0 4-3 5L8 31q-4 0-5-4L0 9q0-3 4-4z" />
            <path d="M25 8C17 4 6 8 9 13s14 1 15 7-10 8-18 4" stroke="#fff" strokeWidth="4.500" />
          </Svg>
        </InputLogo>
        <span>中</span>
        <Svg w={12} h={12}><circle cx="3" cy="4" r="2" stroke="#0a6fd6" strokeWidth="1.500" /><path d="M9.500 6v2c0 1-1 2-2 3" stroke="#0a6fd6" strokeWidth="2.500" /></Svg>
        <Svg w={12} h={16}><rect x="3" width="6" height="10" rx="3" fill="#0a6fd6" /><path d="M1 7c0 7 10 7 10 0M6 12v1M4 15h4" stroke="#0a6fd6" strokeWidth="1.500" /></Svg>
        <Svg w={15} h={12}><rect x=".8" y=".8" width="13.500" height="10.500" rx="1.500" stroke="#0a6fd6" strokeWidth="1.500" /><path d="M3 4h9M3 6.500h9M4 9h7" stroke="#0a6fd6" strokeWidth="1.500" strokeDasharray="1.500 1" /></Svg>
        <Svg w={13} h={13}><g fill="#0a6fd6"><rect width="6" height="6" rx="1.500" /><rect y="7" width="6" height="6" rx="1.500" /><rect x="7" y="7" width="6" height="6" rx="1.500" /></g><rect x="7.800" y=".8" width="4.500" height="4.500" rx="1.500" stroke="#0a6fd6" strokeWidth="1.500" /></Svg>
      </InputBar>
      <SiteMark>
        <Svg w={42} h={42}>
          <path fill="#52b6ea" d="M42 2C24 2 8 10 5 24 3 12 20-2 42 2z" />
          <path fill="#3a86c8" d="M30 5C12 10 2 20 6 28c4 5 14 2 18-3-6 2-12 1-10-5C16 13 24 8 30 5z" />
          <path fill="#3e9d57" d="M26 13c14 0 18 8 12 16-8 9-22 14-33 12 12-1 24-6 27-14 2-6-1-10-6-14z" />
          <path fill="#3a86c8" d="M20 22c6-2 8 2 4 5-3 2-8 2-10 1 4-1 8-3 6-6z" />
        </Svg>
        <div>
          <SiteMarkText>极光下载站</SiteMarkText>
          <SiteMarkUrl>www.xz7.com</SiteMarkUrl>
        </div>
      </SiteMark>
    </Shell>
  );
}
